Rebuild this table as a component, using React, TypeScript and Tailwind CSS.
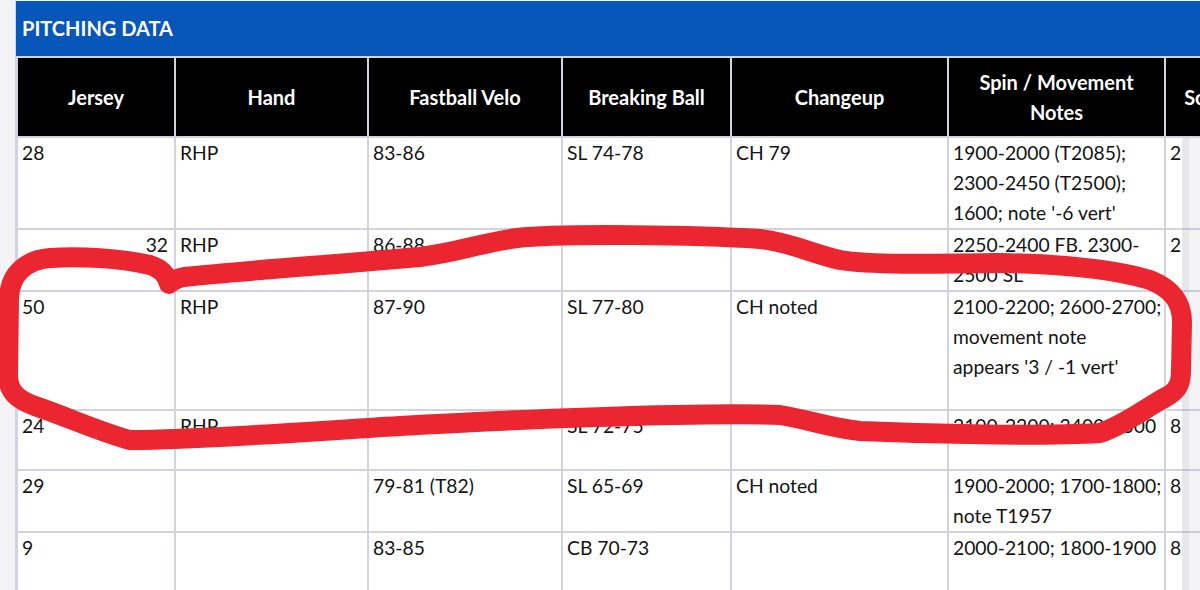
const rows = [
  { h: "h-[90px]", jersey: "28", right: false, hand: "RHP", fb: "83-86", bb: "SL 74-78", ch: "CH 79", notes: ["1900-2000 (T2085);", "2300-2450 (T2500);", "1600; note '-6 vert'"], sc: "2" },
  { h: "h-[60px]", jersey: "32", right: true, hand: "RHP", fb: "86-88", bb: "", ch: "", notes: ["2250-2400 FB. 2300-", "2500 SL"], sc: "2" },
  { h: "h-[117px]", jersey: "50", right: false, hand: "RHP", fb: "87-90", bb: "SL 77-80", ch: "CH noted", notes: ["2100-2200; 2600-2700;", "movement note", "appears '3 / -1 vert'"], sc: "2" },
  { h: "h-[58px]", jersey: "24", right: false, hand: "RHP", fb: "83-84", bb: "SL 72-75", ch: "", notes: ["2100-2200; 2400-2500"], sc: "8" },
  { h: "h-[60px]", jersey: "29", right: false, hand: "", fb: "79-81 (T82)", bb: "SL 65-69", ch: "CH noted", notes: ["1900-2000; 1700-1800;", "note T1957"], sc: "8" },
  { h: "h-[58px]", jersey: "9", right: false, hand: "", fb: "83-85", bb: "CB 70-73", ch: "", notes: ["2000-2100; 1800-1900"], sc: "8" },
];

const headers = ["Jersey", "Hand", "Fastball Velo", "Breaking Ball", "Changeup", "Spin / Movement Notes", "Score"];

function Cell({ children, className = "" }: { children?: React.ReactNode; className?: string }) {
  return <div className={`bg-white pl-1 pr-1 text-[19.3px] leading-[30px] text-[#141414] ${className}`}>{children}</div>;
}

export default function App() {
  return (
    <div className="relative h-[590px] w-[1200px] overflow-hidden bg-[#f4f4f6] font-['Lato',sans-serif]">
      <div className="ml-[15px] mt-px w-[1300px] bg-[#d2d2e0] pl-px">
        <div className="flex h-[55px] items-center bg-[#0756b9] px-1.5 pb-0.5 text-[20px] font-bold text-white">
          PITCHING DATA
        </div>
        <div className="grid grid-cols-[156px_191px_192px_167px_215px_215px_86px_160px] gap-[2px] p-[2px]">
          {headers.map((h) => (
            <div key={h} className="flex h-[78px] items-center justify-center bg-black px-3 text-center text-[20px] font-bold leading-[30px] text-white">
              {h === "Spin / Movement Notes" ? (
                <span>
                  Spin / Movement
                  <br />
                  Notes
                </span>
              ) : (
                h
              )}
            </div>
          ))}
          <div className="bg-black" />
          {rows.map((r, i) => (
            <div key={i} className="contents">
              <Cell className={`${r.h} ${r.right ? "pr-1.5 text-right" : ""}`}>{r.jersey}</Cell>
              <Cell className={r.h}>{r.hand}</Cell>
              <Cell className={r.h}>{r.fb}</Cell>
              <Cell className={r.h}>{r.bb}</Cell>
              <Cell className={r.h}>{r.ch}</Cell>
              <Cell className={r.h}>
                {r.notes.map((n) => (
                  <div key={n} className="whitespace-nowrap">{n}</div>
                ))}
              </Cell>
              <Cell className={r.h}>{r.sc}</Cell>
              <Cell className={r.h} />
            </div>
          ))}
        </div>
      </div>

      {/* scroll shadow at the right edge */}
      <div className="absolute bottom-0 left-[1182px] top-[138px] w-[7px] bg-[#8a8aa0]/20" />
      <div className="absolute bottom-0 left-[1189px] top-[138px] w-[11px] bg-[#8a8aa0]/10" />

      {/* hand-drawn red loop */}
      <svg className="pointer-events-none absolute inset-0" width="1200" height="590" viewBox="0 0 1200 590">
        <path
          d="M169 284 Q166 270 150 265 C120 258 80 256 50 258 C25 260 9 275 9 300 L8 375 C8 392 18 400 35 406 C70 418 100 432 130 440 C200 440 300 432 400 426 C500 420 700 412 780 415 C810 420 830 428 860 431 C950 435 1050 436 1100 433 C1125 425 1150 405 1166 397 C1180 390 1181 380 1181 370 L1182 322 C1182 300 1170 288 1150 280 C1110 268 1060 264 1000 263 C930 264 870 265 840 260 C810 253 790 242 760 239 C700 235 560 233 517 238 C480 243 460 252 420 257 C330 265 250 270 184 277 Q174 279 169 284 Z"
          fill="none"
          stroke="#eb2631"
          strokeWidth="20"
          strokeLinecap="round"
          strokeLinejoin="round"
        />
      </svg>
    </div>
  );
}
